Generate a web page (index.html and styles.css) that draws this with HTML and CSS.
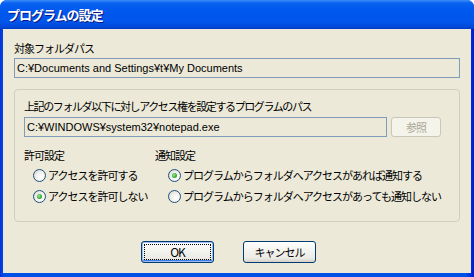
FILE: index.html
```html
<!DOCTYPE html>
<html lang="ja">
<head>
    <meta charset="UTF-8">
    <title>プログラムの設定</title>
    <link rel="stylesheet" href="styles.css">
</head>
<body>
    <div class="window">
        <div class="titlebar">プログラムの設定</div>
        <div class="client">
            <div class="label">対象フォルダパス</div>
            <div class="field wide">C:¥Documents and Settings¥t¥My Documents</div>

            <div class="group">
                <div class="label">上記のフォルダ以下に対しアクセス権を設定するプログラムのパス</div>
                <div class="pathrow">
                    <div class="field path">C:¥WINDOWS¥system32¥notepad.exe</div>
                    <div class="btn disabled">参照</div>
                </div>

                <div class="options">
                    <div class="col left">
                        <div class="label">許可設定</div>
                        <div class="radio"><span class="dot"></span>アクセスを許可する</div>
                        <div class="radio"><span class="dot on"></span>アクセスを許可しない</div>
                    </div>
                    <div class="col right">
                        <div class="label">通知設定</div>
                        <div class="radio"><span class="dot on"></span>プログラムからフォルダへアクセスがあれば通知する</div>
                        <div class="radio"><span class="dot"></span>プログラムからフォルダへアクセスがあっても通知しない</div>
                    </div>
                </div>
            </div>

            <div class="buttons">
                <div class="btn default"><span class="focus">OK</span></div>
                <div class="btn">キャンセル</div>
            </div>
        </div>
    </div>
</body>
</html>
```

FILE: styles.css
```css
body {
    margin: 0;
    background: #ffffff;
    font: normal 11px "Noto Sans CJK JP", sans-serif;
    letter-spacing: -1px;
    color: #000;
}

.window {
    width: 474px;
    height: 277px;
    box-sizing: border-box;
    border-radius: 7px 7px 0 0;
    background: linear-gradient(90deg, #0831d9 0, #0050e6 4px, #0050e6 466px, #0019cf 474px);
    padding: 0 3px 4px 3px;
    display: flex;
    flex-direction: column;
}

.titlebar {
    height: 29px;
    margin: 0 -3px;
    padding-left: 7px;
    box-sizing: border-box;
    border-radius: 7px 7px 0 0;
    background: linear-gradient(#3d8ff9 0, #0a62f0 3px, #0058ee 10px, #0155eb 22px, #0148d8 27px, #003cc4 29px);
    color: #fff;
    font-weight: bold;
    font-size: 13px;
    letter-spacing: -1px;
    line-height: 29px;
    text-shadow: 1px 1px #0a1883;
}

.client {
    flex: 1;
    background: #ece9d8;
    padding: 12px 11px 0 11px;
}

.label {
    line-height: 14px;
    height: 14px;
    white-space: nowrap;
}

.field {
    height: 20px;
    box-sizing: border-box;
    border: 1px solid #7f9db9;
    background: #ece9d8;
    font: 11px "Liberation Sans", sans-serif;
    letter-spacing: 0;
    line-height: 18px;
    padding-left: 2px;
    white-space: nowrap;
}

.wide {
    margin-top: 3px;
}

.group {
    margin-top: 11px;
    border: 1px solid #d0d0bf;
    border-radius: 4px;
    padding: 9px 18px 18px 9px;
    height: 133px;
    box-sizing: border-box;
}

.group > .label {
    letter-spacing: -1.4px;
}

.pathrow {
    display: flex;
    gap: 4px;
    margin-top: 4px;
}

.path {
    width: 363px;
}

.btn {
    width: 73px;
    height: 22px;
    box-sizing: border-box;
    border: 1px solid #003c74;
    border-radius: 3px;
    background: linear-gradient(#ffffff 0, #f4f4f0 40%, #ecebe6 80%, #d6d0c5 100%);
    text-align: center;
    line-height: 20px;
    font-size: 11px;
}

.btn.disabled {
    width: 50px;
    height: 20px;
    line-height: 18px;
    border-color: #c9c7ba;
    background: #f5f4ea;
    color: #aca899;
}

.options {
    display: flex;
    margin-top: 11px;
}

.col.left {
    width: 143px;
}

.radio {
    display: flex;
    align-items: center;
    height: 14px;
    line-height: 14px;
    white-space: nowrap;
    margin-top: 7px;
}

.col.left .radio {
    padding-left: 9px;
}

.col.right .radio {
    padding-left: 13px;
}

.col .label + .radio {
    margin-top: 6px;
}

.dot {
    width: 13px;
    height: 13px;
    box-sizing: border-box;
    border: 1px solid #1c5180;
    border-radius: 50%;
    background: radial-gradient(circle at 65% 65%, #ffffff 0, #f0efea 50%, #d4d0c4 100%);
    margin-right: 2px;
    flex: none;
    display: flex;
    align-items: center;
    justify-content: center;
}

.dot.on::after {
    content: "";
    width: 5px;
    height: 5px;
    border-radius: 50%;
    background: radial-gradient(circle at 40% 40%, #a6ea98 0, #3cb43c 50%, #1d8a1d 100%);
}

.buttons {
    display: flex;
    gap: 29px;
    padding-left: 127px;
    margin-top: 19px;
}

.btn.default {
    box-shadow: inset 0 0 0 1px #9dbcf5, inset 0 -1px 0 1px #3c7fe8;
    padding: 2px;
    line-height: 16px;
    font-size: 12px;
}

.focus {
    display: block;
    height: 16px;
    outline: 1px dotted #000;
    outline-offset: -1px;
}
```
